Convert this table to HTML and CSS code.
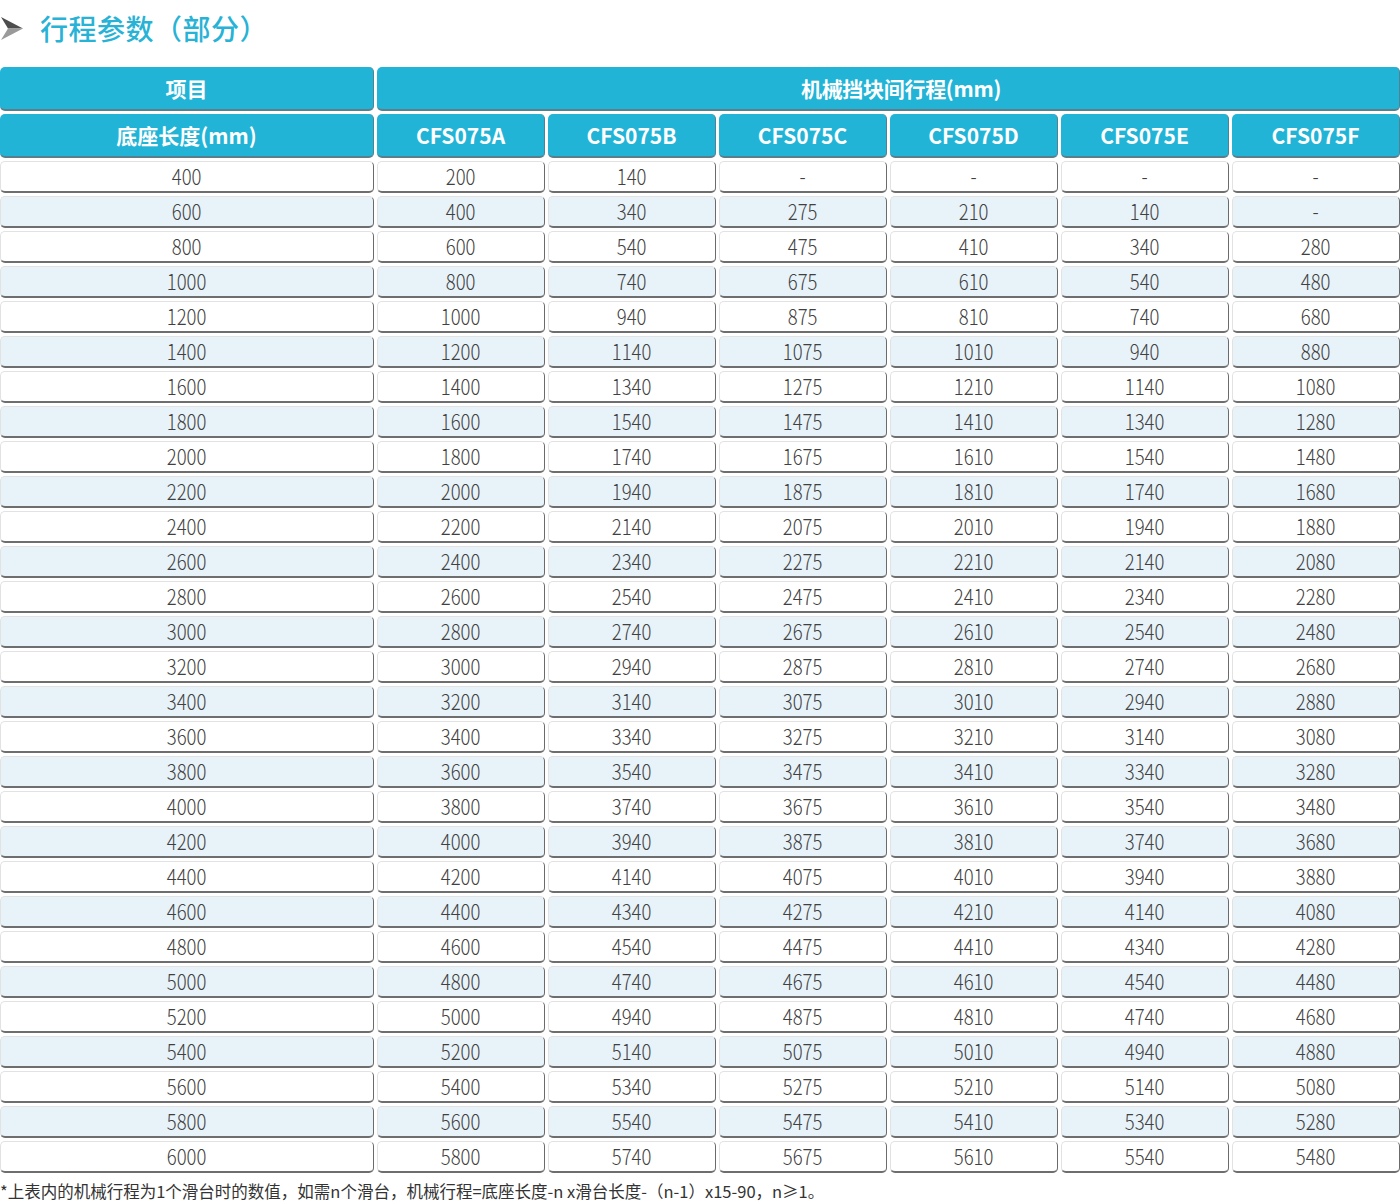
FILE: index.html
```html
<!DOCTYPE html>
<html lang="zh-CN">
<head>
<meta charset="utf-8">
<title>行程参数（部分）</title>
<link rel="stylesheet" href="styles.css">
</head>
<body>
<div class="page">
  <h2 class="title">
    <svg class="arrow" viewBox="0 0 24 24" width="24" height="24" aria-hidden="true">
      <polygon points="1,0 23,11.5 8,11.5" fill="#4d4d4d"/>
      <polygon points="8,11.5 23,11.5 1,23" fill="#9a9a9a"/>
    </svg>
    <span>行程参数（部分）</span>
  </h2>

  <div class="grid">
    <div class="c h">项目</div>
    <div class="c h span">机械挡块间行程(mm)</div>

    <div class="c h">底座长度(mm)</div>
    <div class="c h">CFS075A</div>
    <div class="c h">CFS075B</div>
    <div class="c h">CFS075C</div>
    <div class="c h">CFS075D</div>
    <div class="c h">CFS075E</div>
    <div class="c h">CFS075F</div>

    <div class="row"><div class="c d"><span>400</span></div><div class="c d"><span>200</span></div><div class="c d"><span>140</span></div><div class="c d"><span>-</span></div><div class="c d"><span>-</span></div><div class="c d"><span>-</span></div><div class="c d"><span>-</span></div></div>
    <div class="row alt"><div class="c d"><span>600</span></div><div class="c d"><span>400</span></div><div class="c d"><span>340</span></div><div class="c d"><span>275</span></div><div class="c d"><span>210</span></div><div class="c d"><span>140</span></div><div class="c d"><span>-</span></div></div>
    <div class="row"><div class="c d"><span>800</span></div><div class="c d"><span>600</span></div><div class="c d"><span>540</span></div><div class="c d"><span>475</span></div><div class="c d"><span>410</span></div><div class="c d"><span>340</span></div><div class="c d"><span>280</span></div></div>
    <div class="row alt"><div class="c d"><span>1000</span></div><div class="c d"><span>800</span></div><div class="c d"><span>740</span></div><div class="c d"><span>675</span></div><div class="c d"><span>610</span></div><div class="c d"><span>540</span></div><div class="c d"><span>480</span></div></div>
    <div class="row"><div class="c d"><span>1200</span></div><div class="c d"><span>1000</span></div><div class="c d"><span>940</span></div><div class="c d"><span>875</span></div><div class="c d"><span>810</span></div><div class="c d"><span>740</span></div><div class="c d"><span>680</span></div></div>
    <div class="row alt"><div class="c d"><span>1400</span></div><div class="c d"><span>1200</span></div><div class="c d"><span>1140</span></div><div class="c d"><span>1075</span></div><div class="c d"><span>1010</span></div><div class="c d"><span>940</span></div><div class="c d"><span>880</span></div></div>
    <div class="row"><div class="c d"><span>1600</span></div><div class="c d"><span>1400</span></div><div class="c d"><span>1340</span></div><div class="c d"><span>1275</span></div><div class="c d"><span>1210</span></div><div class="c d"><span>1140</span></div><div class="c d"><span>1080</span></div></div>
    <div class="row alt"><div class="c d"><span>1800</span></div><div class="c d"><span>1600</span></div><div class="c d"><span>1540</span></div><div class="c d"><span>1475</span></div><div class="c d"><span>1410</span></div><div class="c d"><span>1340</span></div><div class="c d"><span>1280</span></div></div>
    <div class="row"><div class="c d"><span>2000</span></div><div class="c d"><span>1800</span></div><div class="c d"><span>1740</span></div><div class="c d"><span>1675</span></div><div class="c d"><span>1610</span></div><div class="c d"><span>1540</span></div><div class="c d"><span>1480</span></div></div>
    <div class="row alt"><div class="c d"><span>2200</span></div><div class="c d"><span>2000</span></div><div class="c d"><span>1940</span></div><div class="c d"><span>1875</span></div><div class="c d"><span>1810</span></div><div class="c d"><span>1740</span></div><div class="c d"><span>1680</span></div></div>
    <div class="row"><div class="c d"><span>2400</span></div><div class="c d"><span>2200</span></div><div class="c d"><span>2140</span></div><div class="c d"><span>2075</span></div><div class="c d"><span>2010</span></div><div class="c d"><span>1940</span></div><div class="c d"><span>1880</span></div></div>
    <div class="row alt"><div class="c d"><span>2600</span></div><div class="c d"><span>2400</span></div><div class="c d"><span>2340</span></div><div class="c d"><span>2275</span></div><div class="c d"><span>2210</span></div><div class="c d"><span>2140</span></div><div class="c d"><span>2080</span></div></div>
    <div class="row"><div class="c d"><span>2800</span></div><div class="c d"><span>2600</span></div><div class="c d"><span>2540</span></div><div class="c d"><span>2475</span></div><div class="c d"><span>2410</span></div><div class="c d"><span>2340</span></div><div class="c d"><span>2280</span></div></div>
    <div class="row alt"><div class="c d"><span>3000</span></div><div class="c d"><span>2800</span></div><div class="c d"><span>2740</span></div><div class="c d"><span>2675</span></div><div class="c d"><span>2610</span></div><div class="c d"><span>2540</span></div><div class="c d"><span>2480</span></div></div>
    <div class="row"><div class="c d"><span>3200</span></div><div class="c d"><span>3000</span></div><div class="c d"><span>2940</span></div><div class="c d"><span>2875</span></div><div class="c d"><span>2810</span></div><div class="c d"><span>2740</span></div><div class="c d"><span>2680</span></div></div>
    <div class="row alt"><div class="c d"><span>3400</span></div><div class="c d"><span>3200</span></div><div class="c d"><span>3140</span></div><div class="c d"><span>3075</span></div><div class="c d"><span>3010</span></div><div class="c d"><span>2940</span></div><div class="c d"><span>2880</span></div></div>
    <div class="row"><div class="c d"><span>3600</span></div><div class="c d"><span>3400</span></div><div class="c d"><span>3340</span></div><div class="c d"><span>3275</span></div><div class="c d"><span>3210</span></div><div class="c d"><span>3140</span></div><div class="c d"><span>3080</span></div></div>
    <div class="row alt"><div class="c d"><span>3800</span></div><div class="c d"><span>3600</span></div><div class="c d"><span>3540</span></div><div class="c d"><span>3475</span></div><div class="c d"><span>3410</span></div><div class="c d"><span>3340</span></div><div class="c d"><span>3280</span></div></div>
    <div class="row"><div class="c d"><span>4000</span></div><div class="c d"><span>3800</span></div><div class="c d"><span>3740</span></div><div class="c d"><span>3675</span></div><div class="c d"><span>3610</span></div><div class="c d"><span>3540</span></div><div class="c d"><span>3480</span></div></div>
    <div class="row alt"><div class="c d"><span>4200</span></div><div class="c d"><span>4000</span></div><div class="c d"><span>3940</span></div><div class="c d"><span>3875</span></div><div class="c d"><span>3810</span></div><div class="c d"><span>3740</span></div><div class="c d"><span>3680</span></div></div>
    <div class="row"><div class="c d"><span>4400</span></div><div class="c d"><span>4200</span></div><div class="c d"><span>4140</span></div><div class="c d"><span>4075</span></div><div class="c d"><span>4010</span></div><div class="c d"><span>3940</span></div><div class="c d"><span>3880</span></div></div>
    <div class="row alt"><div class="c d"><span>4600</span></div><div class="c d"><span>4400</span></div><div class="c d"><span>4340</span></div><div class="c d"><span>4275</span></div><div class="c d"><span>4210</span></div><div class="c d"><span>4140</span></div><div class="c d"><span>4080</span></div></div>
    <div class="row"><div class="c d"><span>4800</span></div><div class="c d"><span>4600</span></div><div class="c d"><span>4540</span></div><div class="c d"><span>4475</span></div><div class="c d"><span>4410</span></div><div class="c d"><span>4340</span></div><div class="c d"><span>4280</span></div></div>
    <div class="row alt"><div class="c d"><span>5000</span></div><div class="c d"><span>4800</span></div><div class="c d"><span>4740</span></div><div class="c d"><span>4675</span></div><div class="c d"><span>4610</span></div><div class="c d"><span>4540</span></div><div class="c d"><span>4480</span></div></div>
    <div class="row"><div class="c d"><span>5200</span></div><div class="c d"><span>5000</span></div><div class="c d"><span>4940</span></div><div class="c d"><span>4875</span></div><div class="c d"><span>4810</span></div><div class="c d"><span>4740</span></div><div class="c d"><span>4680</span></div></div>
    <div class="row alt"><div class="c d"><span>5400</span></div><div class="c d"><span>5200</span></div><div class="c d"><span>5140</span></div><div class="c d"><span>5075</span></div><div class="c d"><span>5010</span></div><div class="c d"><span>4940</span></div><div class="c d"><span>4880</span></div></div>
    <div class="row"><div class="c d"><span>5600</span></div><div class="c d"><span>5400</span></div><div class="c d"><span>5340</span></div><div class="c d"><span>5275</span></div><div class="c d"><span>5210</span></div><div class="c d"><span>5140</span></div><div class="c d"><span>5080</span></div></div>
    <div class="row alt"><div class="c d"><span>5800</span></div><div class="c d"><span>5600</span></div><div class="c d"><span>5540</span></div><div class="c d"><span>5475</span></div><div class="c d"><span>5410</span></div><div class="c d"><span>5340</span></div><div class="c d"><span>5280</span></div></div>
    <div class="row"><div class="c d"><span>6000</span></div><div class="c d"><span>5800</span></div><div class="c d"><span>5740</span></div><div class="c d"><span>5675</span></div><div class="c d"><span>5610</span></div><div class="c d"><span>5540</span></div><div class="c d"><span>5480</span></div></div>
  </div>

  <p class="note">*上表内的机械行程为1个滑台时的数值，如需n个滑台，机械行程=底座长度-n x滑台长度-（n-1）x15-90，n≥1。</p>
</div>
</body>
</html>
```

FILE: styles.css
```css
* { box-sizing: border-box; }

html, body {
  margin: 0;
  padding: 0;
  background: #ffffff;
}

body {
  font-family: "Noto Sans CJK SC", "Noto Sans", sans-serif;
  color: #444444;
}

.page {
  width: 1400px;
}

.title {
  display: flex;
  align-items: center;
  gap: 16px;
  height: 56px;
  margin: 0 0 11px 0;
  font-size: 28px;
  font-weight: 500;
  color: #27b2d6;
  letter-spacing: 0.5px;
}

.arrow {
  display: block;
  flex: none;
  margin-top: 1px;
}

.grid {
  display: grid;
  grid-template-columns: 374px repeat(6, 168px);
  grid-template-rows: 44px 44px;
  grid-auto-rows: 32px;
  column-gap: 3px;
  row-gap: 3px;
}

.row {
  display: contents;
}

.c {
  display: flex;
  align-items: center;
  justify-content: center;
  border-radius: 5px;
  white-space: nowrap;
}

.h {
  background: #22b4d7;
  color: #ffffff;
  font-size: 21px;
  font-weight: 700;
  border-bottom: 2px solid #5a7f8a;
  border-right: 1px solid #4f8393;
}

.span {
  grid-column: 2 / span 6;
  padding-left: 26px;
  letter-spacing: -0.3px;
}

.d {
  background: #ffffff;
  border: 1px solid #e2e2e2;
  border-right: 1.5px solid #6b6b6b;
  border-bottom: 2px solid #6e6e6e;
  padding-bottom: 3px;
  font-size: 22px;
  line-height: 24px;
  font-weight: 300;
  color: #404040;
}

.row.alt .d {
  background: #e7f2f9;
}

.d span {
  display: inline-block;
  transform: scaleX(0.84);
}

.note {
  margin: 8px 0 0 0;
  font-size: 16.5px;
  line-height: 20px;
  color: #333333;
  white-space: nowrap;
}
```
